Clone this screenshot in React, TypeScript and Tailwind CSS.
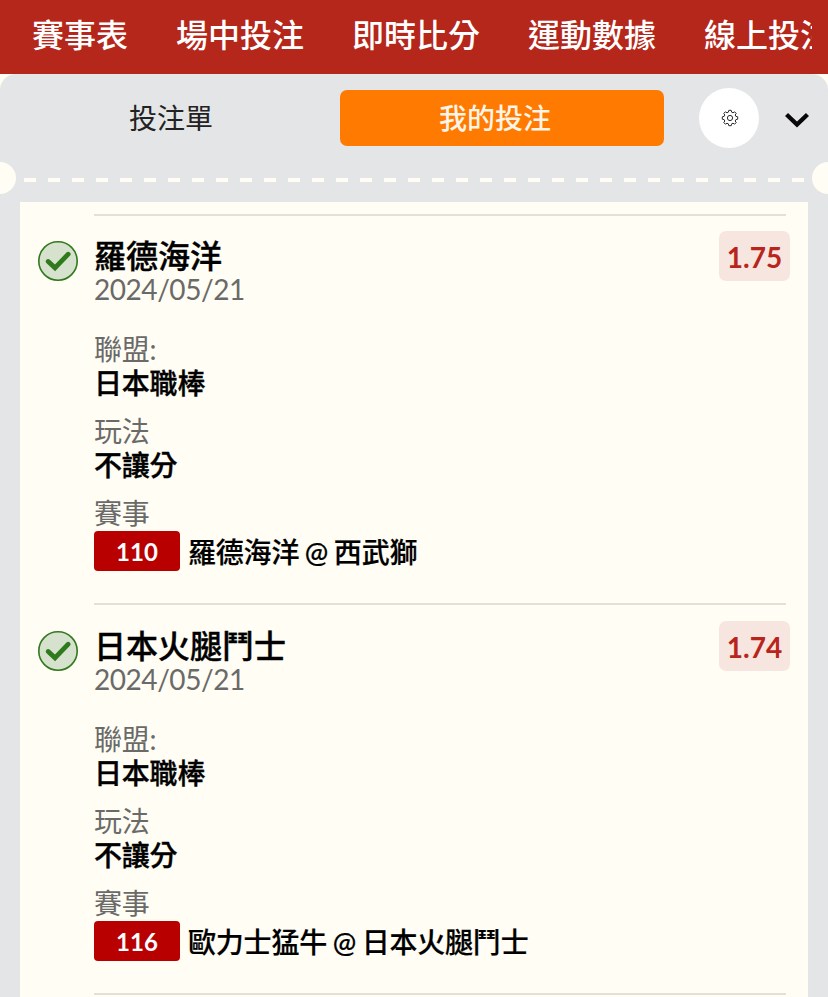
import React from "react";

type Bet = { team: string; odds: string; no: string; away: string; home: string };
const bets: Bet[] = [
  { team: "羅德海洋", odds: "1.75", no: "110", away: "羅德海洋", home: "西武獅" },
  { team: "日本火腿鬥士", odds: "1.74", no: "116", away: "歐力士猛牛", home: "日本火腿鬥士" },
];
const tabs = ["賽事表", "場中投注", "即時比分", "運動數據", "線上投注"];

function Check() {
  return (
    <svg className="block h-10 w-10" viewBox="0 0 40 40" fill="none">
      <circle cx="20" cy="20" r="19.2" fill="#d6e2cd" stroke="#2f7a1d" strokeWidth="1.6" />
      <path d="M10.2 20.5L17 26.8L30.2 13.2" stroke="#2f7a1d" strokeWidth="4.8" strokeLinecap="round" />
    </svg>
  );
}

function Gear() {
  return (
    <svg className="ml-0.5 h-[18px] w-[18px]" viewBox="0 0 18 18" fill="none" stroke="#2a2a2a" strokeWidth="1" strokeLinejoin="round">
      <path d="M7.3 3.2L7.8 1.3H10.2L10.7 3.2L12 3.8L13.6 2.8L15.2 4.4L14.2 6L14.8 7.3L16.7 7.8V10.2L14.8 10.7L14.2 12L15.2 13.6L13.6 15.2L12 14.2L10.7 14.8L10.2 16.7H7.8L7.3 14.8L6 14.2L4.4 15.2L2.8 13.6L3.8 12L3.2 10.7L1.3 10.2V7.8L3.2 7.3L3.8 6L2.8 4.4L4.4 2.8L6 3.8Z" />
      <circle cx="9" cy="9" r="2.6" />
    </svg>
  );
}

function BetRow({ bet, first }: { bet: Bet; first: boolean }) {
  return (
    <section className="flex h-[390px] px-[18px]">
      <div className="w-14 shrink-0 pt-[27px]"><Check /></div>
      <div className="min-w-0 flex-1">
        <div className={first ? "mr-1 h-0.5 bg-[#e3e0da]" : "-mt-px mr-1 mb-px h-0.5 bg-[#e3e0da]"} />
        <div className="flex justify-between">
          <div className="pt-[22px]">
            <h2 className="h-9 text-[32px] leading-[35px] font-medium text-black [-webkit-text-stroke:0.4px]">{bet.team}</h2>
            <p className="h-[34px] text-[28px] leading-[31px] tracking-[-0.45px] text-[#6a6a68]">2024/05/21</p>
          </div>
          <div className="mt-[15px] flex h-[50px] w-[71px] items-center justify-center rounded-[7px] bg-[#f7e6df] pt-px text-[28px] font-bold text-[#b8251c]">{bet.odds}</div>
        </div>
        <dl className="pt-[25px] text-[28px] leading-[33px] tracking-[-0.2px]">
          <dt className="h-[34px] text-[#6a6a68]">聯盟:</dt>
          <dd className="mb-[14px] h-[34px] font-medium text-black [-webkit-text-stroke:0.4px]">日本職棒</dd>
          <dt className="h-[34px] text-[#6a6a68]">玩法</dt>
          <dd className="mb-[14px] h-[34px] font-medium text-black [-webkit-text-stroke:0.4px]">不讓分</dd>
          <dt className="h-[34px] text-[#6a6a68]">賽事</dt>
          <dd className="flex h-10 items-center font-medium text-black">
            <span className="mr-2 flex h-10 w-[86px] items-center justify-center rounded bg-[#b90000] text-[24px] font-bold tracking-normal text-white">{bet.no}</span>
            <span className="whitespace-nowrap pt-[3px] [word-spacing:-1.2px] [-webkit-text-stroke:0.2px]">{bet.away} @ {bet.home}</span>
          </dd>
        </dl>
      </div>
    </section>
  );
}

export default function App() {
  return (
    <div className="h-[997px] w-[828px] overflow-hidden bg-[#fffdf4] font-[Lato,'Noto_Sans_CJK_TC',sans-serif]">
      <nav className="h-[74px] overflow-hidden bg-[#b5261b] pl-8 pr-4">
        <div className="flex gap-12 overflow-hidden text-[32px] leading-[70px] font-medium text-white">
          {tabs.map((t) => <span key={t} className="shrink-0 whitespace-nowrap">{t}</span>)}
        </div>
      </nav>
      <main className="h-[923px] overflow-hidden rounded-t-[16px] bg-[#e4e5e7]">
        <header className="flex h-[88px] items-center">
          <div className="w-[340px] pl-0.5 text-center text-[28px] text-[#222]">投注單</div>
          <button className="h-14 w-[324px] rounded-[7px] bg-[#ff7a00] pr-[14px] text-[28px] font-medium text-[#fff4e8]">我的投注</button>
          <button className="ml-[35px] flex h-[60px] w-[60px] items-center justify-center rounded-full bg-white"><Gear /></button>
          <svg className="ml-[26px] mt-1 h-4 w-6" viewBox="0 0 24 16" fill="none" stroke="#080808" strokeWidth="4.4"><path d="M1.5 2.5L12 12.5L22.5 2.5" /></svg>
        </header>
        <div className="flex h-10 items-start">
          <div className="h-8 w-4 rounded-r-full bg-[#fffdf4]" />
          <svg className="h-8 w-[796px]" viewBox="0 0 796 32"><path d="M8 18H788" stroke="#fffdf4" strokeWidth="4" strokeDasharray="12 12" /></svg>
          <div className="h-8 w-4 rounded-l-full bg-[#fffdf4]" />
        </div>
        <div className="mx-5 bg-[#fffdf4] pt-3">
          {bets.map((b, i) => <BetRow key={b.no} bet={b} first={i === 0} />)}
          <div className="-mt-px ml-[74px] mr-[22px] h-5 border-t-2 border-[#e3e0da]" />
        </div>
      </main>
    </div>
  );
}
